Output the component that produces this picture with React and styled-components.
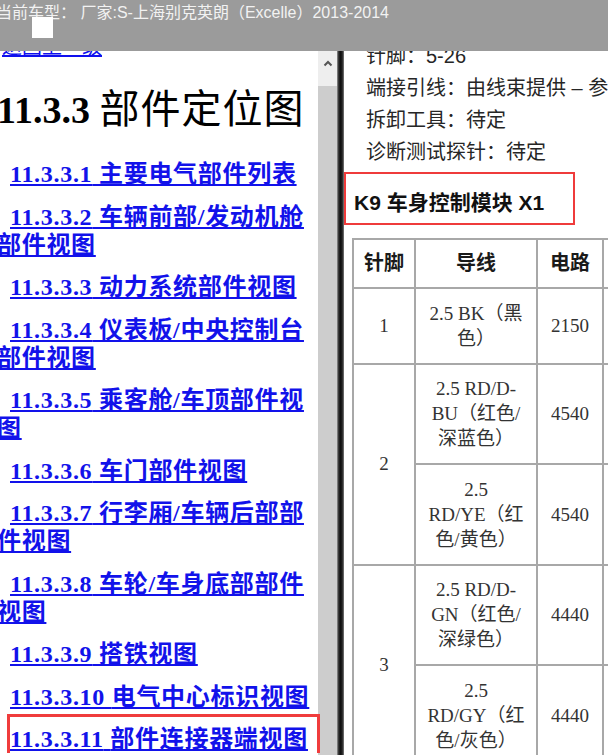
import React from 'react'
import styled, { createGlobalStyle } from 'styled-components'

const serif = '"Liberation Serif", "Noto Sans CJK SC", serif'
const sans = '"Liberation Sans", "Noto Sans CJK SC", sans-serif'

const tocItems = [
  { num: '11.3.3.1', lines: ['主要电气部件列表'] },
  { num: '11.3.3.2', lines: ['车辆前部/发动机舱', '部件视图'] },
  { num: '11.3.3.3', lines: ['动力系统部件视图'] },
  { num: '11.3.3.4', lines: ['仪表板/中央控制台', '部件视图'] },
  { num: '11.3.3.5', lines: ['乘客舱/车顶部件视', '图'] },
  { num: '11.3.3.6', lines: ['车门部件视图'] },
  { num: '11.3.3.7', lines: ['行李厢/车辆后部部', '件视图'] },
  { num: '11.3.3.8', lines: ['车轮/车身底部部件', '视图'] },
  { num: '11.3.3.9', lines: ['搭铁视图'] },
  { num: '11.3.3.10', lines: ['电气中心标识视图'] },
  { num: '11.3.3.11', lines: ['部件连接器端视图'], active: true },
]

const infoLines = [
  '针脚：5-26',
  '端接引线：由线束提供 – 参见线束维修信息',
  '拆卸工具：待定',
  '诊断测试探针：待定',
]

const columns = [
  { title: '针脚', width: 62 },
  { title: '导线', width: 122 },
  { title: '电路', width: 66 },
  { title: '功能', width: 220 },
]

const pins = [
  { pin: '1', wires: [{ lines: ['2.5 BK（黑', '色）'], circuit: '2150', fn: '接地' }] },
  {
    pin: '2',
    wires: [
      { lines: ['2.5 RD/D-', 'BU（红色/', '深蓝色）'], circuit: '4540', fn: '蓄电池正极电压' },
      { lines: ['2.5', 'RD/YE（红', '色/黄色）'], circuit: '4540', fn: '蓄电池正极电压' },
    ],
  },
  {
    pin: '3',
    wires: [
      { lines: ['2.5 RD/D-', 'GN（红色/', '深绿色）'], circuit: '4440', fn: '蓄电池正极电压' },
      { lines: ['2.5', 'RD/GY（红', '色/灰色）'], circuit: '4440', fn: '蓄电池正极电压' },
    ],
  },
]

const withBreaks = (lines) =>
  lines.map((l, i) => (
    <React.Fragment key={i}>
      {i > 0 && <br />}
      {l}
    </React.Fragment>
  ))

const App = () => {
  return (
    <Page>
      <GlobalStyle />
      <TopBar>
        <BarTitle>当前车型： 厂家:S-上海别克英朗（Excelle）2013-2014</BarTitle>
        <CloseBox />
      </TopBar>
      <Body>
        <LeftPane>
          <LeftContent>
            <BackLink href="#">返回上一级</BackLink>
            <Heading>
              11.3.3 <HeadingCjk>部件定位图</HeadingCjk>
            </Heading>
            <TocList>
              {tocItems.map((item) => (
                <TocItem key={item.num} $active={item.active}>
                  <TocLink href="#">
                    {item.num} {withBreaks(item.lines)}
                  </TocLink>
                </TocItem>
              ))}
            </TocList>
          </LeftContent>
        </LeftPane>
        <ScrollTrack>
          <ScrollButton>
            <svg width="10" height="7" viewBox="0 0 10 7">
              <polyline points="1.5,5.5 5,2 8.5,5.5" fill="none" stroke="#555" strokeWidth="2" />
            </svg>
          </ScrollButton>
        </ScrollTrack>
        <Splitter />
        <RightPane>
          <RightContent>
            {infoLines.map((line) => (
              <InfoLine key={line}>{line}</InfoLine>
            ))}
            <ModuleTitle>K9 车身控制模块 X1</ModuleTitle>
            <PinTable>
              <colgroup>
                {columns.map((c) => (
                  <col key={c.title} style={{ width: c.width }} />
                ))}
              </colgroup>
              <thead>
                <tr>
                  {columns.map((c) => (
                    <Th key={c.title}>{c.title}</Th>
                  ))}
                </tr>
              </thead>
              <tbody>
                {pins.map((p) =>
                  p.wires.map((w, i) => (
                    <tr key={p.pin + i}>
                      {i === 0 && <Td rowSpan={p.wires.length}>{p.pin}</Td>}
                      <Td>{withBreaks(w.lines)}</Td>
                      <Td>{w.circuit}</Td>
                      <Td>{w.fn}</Td>
                    </tr>
                  ))
                )}
              </tbody>
            </PinTable>
          </RightContent>
        </RightPane>
      </Body>
    </Page>
  )
}

export default App

const GlobalStyle = createGlobalStyle`
    html, body {
        margin: 0;
        padding: 0;
        background: #fff;
        overflow: hidden;
    }
`
const Page = styled.div`
    width: 608px;
    height: 755px;
    display: flex;
    flex-direction: column;
    overflow: hidden;
    background: #fff;
`
const TopBar = styled.div`
    position: relative;
    z-index: 3;
    height: 51px;
    flex-shrink: 0;
    background: #9b9b9b;
`
const BarTitle = styled.div`
    margin-left: -4px;
    padding-top: 3px;
    font-family: ${sans};
    font-size: 16px;
    line-height: 20px;
    color: #f2f2f2;
    white-space: nowrap;
`
const CloseBox = styled.div`
    position: absolute;
    left: 32px;
    top: 17px;
    width: 21px;
    height: 21px;
    background: #fff;
`
const Body = styled.div`
    flex: 1;
    min-height: 0;
    display: flex;
`
const LeftPane = styled.div`
    position: relative;
    z-index: 2;
    width: 318px;
    flex-shrink: 0;
    background: #fff;
`
const LeftContent = styled.div`
    margin: -16px 0 0 -3px;
    display: flex;
    flex-direction: column;
    align-items: flex-start;
`
const BackLink = styled.a`
    margin-left: 5px;
    font-family: ${serif};
    font-size: 20px;
    line-height: 24px;
    color: #1010ee;
    text-decoration: underline;
`
const Heading = styled.h1`
    margin: 29px 0 0;
    font-family: ${serif};
    font-size: 38px;
    line-height: 44px;
    font-weight: 700;
    color: #000;
    white-space: nowrap;
`
const HeadingCjk = styled.span`
    font-size: 40px;
    font-weight: 400;
    letter-spacing: 1px;
`
const TocList = styled.div`
    margin-top: 28px;
    display: flex;
    flex-direction: column;
    gap: 14.5px;
    align-self: stretch;
`
const TocItem = styled.div`
    text-indent: 13px;
    white-space: nowrap;

    ${(p) =>
      p.$active &&
      `
        margin: -11px 0 0 10px;
        width: 307px;
        padding-top: 8px;
        text-indent: 0;
        border: 3px solid #f03c3c;
        border-bottom: none;
    `}
`
const TocLink = styled.a`
    font-family: ${serif};
    font-size: 24px;
    line-height: 28px;
    font-weight: 700;
    letter-spacing: 0.7px;
    color: #1212ea;
    text-decoration: underline;
`
const ScrollTrack = styled.div`
    width: 19px;
    flex-shrink: 0;
    background: #cdcdcd;
`
const ScrollButton = styled.div`
    height: 35px;
    background: #eeeeee;
    display: flex;
    justify-content: center;
    padding-top: 9px;
    box-sizing: border-box;
`
const Splitter = styled.div`
    width: 7px;
    flex-shrink: 0;
    background: linear-gradient(to right, #9a9a9a, #2a2a2a 25%, #0c0c0c 55%, #3a3a3a 85%, #8a8a8a);
`
const RightPane = styled.div`
    flex: 1;
    min-width: 0;
    overflow: hidden;
    background: #fff;
`
const RightContent = styled.div`
    margin-top: -11px;
`
const InfoLine = styled.div`
    padding-left: 22px;
    font-family: ${sans};
    font-size: 20px;
    line-height: 32px;
    color: #262626;
    white-space: nowrap;
`
const ModuleTitle = styled.div`
    margin-top: 4px;
    width: 231px;
    box-sizing: border-box;
    padding: 14px 0 6px 8px;
    border: 2.5px solid #ef3b3b;
    font-family: ${sans};
    font-size: 21px;
    line-height: 29px;
    font-weight: 700;
    color: #111;
    white-space: nowrap;
`
const PinTable = styled.table`
    margin: 13px 0 0 8px;
    width: 472px;
    table-layout: fixed;
    border-collapse: separate;
    border-spacing: 0;
    border-top: 2px solid #a8a8a8;
    border-left: 2px solid #a8a8a8;
`
const Th = styled.th`
    padding: 10px 4px 11px;
    border-right: 2px solid #a8a8a8;
    border-bottom: 2px solid #a8a8a8;
    font-family: ${sans};
    font-size: 20px;
    line-height: 26px;
    font-weight: 700;
    color: #1a1a1a;
    text-align: center;
    white-space: nowrap;
`
const Td = styled.td`
    padding: 11.5px 4px 12px;
    border-right: 2px solid #a8a8a8;
    border-bottom: 2px solid #a8a8a8;
    font-family: ${serif};
    font-size: 19px;
    line-height: 25px;
    color: #333;
    text-align: center;
    vertical-align: middle;
    white-space: nowrap;
`
